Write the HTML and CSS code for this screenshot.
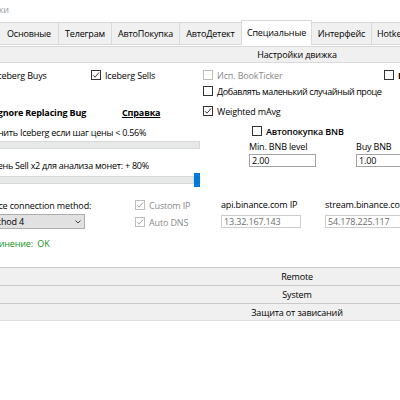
FILE: index.html
```html
<!DOCTYPE html>
<html>
<head>
<meta charset="utf-8">
<link rel="stylesheet" href="styles.css">
</head>
<body>
<div class="window">
  <div class="title"><span class="title-text">Настройки</span></div>
  <div class="tabs">
    <div class="tab t1">Основные</div>
    <div class="tab t2">Телеграм</div>
    <div class="tab t3">АвтоПокупка</div>
    <div class="tab t4">АвтоДетект</div>
    <div class="tab t5 active">Специальные</div>
    <div class="tab t6">Интерфейс</div>
    <div class="tab t7">Hotkeys</div>
  </div>
  <div class="section-head">Настройки движка</div>
  <div class="content">
    <div class="col-left">
      <div class="row">
        <label class="cbl buys"><span class="cb"></span>Iceberg Buys</label>
        <label class="cbl"><span class="cb"><svg viewBox="0 0 8 8"><path d="M1 4.2 L3 6.2 L7 1.5"/></svg></span>Iceberg Sells</label>
      </div>
      <div class="row r3">
        <label class="cbl ignore bold"><span class="cb"></span>Ignore Replacing Bug</label>
        <span class="link">Справка</span>
      </div>
      <div class="row r4"><span class="cut cut-a">Отменить Iceberg если шаг цены &lt; 0.56%</span></div>
      <div class="slider s1"><div class="track"></div></div>
      <div class="row r5"><span class="cut cut-b">Уровень Sell x2 для анализа монет: + 80%</span></div>
      <div class="slider s2"><div class="track"></div><div class="thumb"></div></div>
      <div class="conn">
        <div class="conn-left">
          <div class="row"><span class="cut cut-c">Binance connection method:</span></div>
          <div class="select"><span>Method 4</span><svg class="chev" viewBox="0 0 6 4"><path d="M0.5 0.5 L3 3 L5.5 0.5"/></svg></div>
          <div class="row status"><span class="cut cut-d">Соединение:&nbsp; OK</span></div>
        </div>
        <div class="conn-right">
          <label class="cbl disabled"><span class="cb"><svg viewBox="0 0 8 8"><path d="M1 4.2 L3 6.2 L7 1.5"/></svg></span>Custom IP</label>
          <label class="cbl disabled"><span class="cb"><svg viewBox="0 0 8 8"><path d="M1 4.2 L3 6.2 L7 1.5"/></svg></span>Auto DNS</label>
        </div>
      </div>
    </div>
    <div class="col-right">
      <div class="row">
        <label class="cbl disabled book"><span class="cb"></span>Исп. BookTicker</label>
        <label class="cbl bold"><span class="cb"></span>Extended</label>
      </div>
      <div class="row"><label class="cbl clip"><span class="cb"></span>Добавлять маленький случайный процент</label></div>
      <div class="row r3b"><label class="cbl"><span class="cb"><svg viewBox="0 0 8 8"><path d="M1 4.2 L3 6.2 L7 1.5"/></svg></span>Weighted mAvg</label></div>
      <div class="row r4b"><label class="cbl semi"><span class="cb"></span>Автопокупка BNB</label></div>
      <div class="fields bnb">
        <div class="field f-min"><div class="flabel">Min. BNB level</div><div class="input">2.00</div></div>
        <div class="field f-buy"><div class="flabel">Buy BNB</div><div class="input">1.00</div></div>
      </div>
      <div class="fields ips">
        <div class="field f-api"><div class="flabel">api.binance.com IP</div><div class="input ro">13.32.167.143</div></div>
        <div class="field f-stream"><div class="flabel">stream.binance.com IP</div><div class="input ro">54.178.225.117</div></div>
      </div>
    </div>
  </div>
  <div class="bar">Remote</div>
  <div class="bar">System</div>
  <div class="bar last">Защита от зависаний</div>
</div>
</body>
</html>
```
FILE: styles.css
```css
html, body {
  margin: 0;
  padding: 0;
  width: 400px;
  height: 400px;
  overflow: hidden;
  background: #ffffff;
}
body {
  font-family: "Open Sans", "Noto Sans", sans-serif;
  font-size: 9px;
  letter-spacing: -0.15px;
  color: #000;
}
.window {
  width: 600px;
}
.title {
  height: 20px;
  line-height: 20px;
  color: #9a9a9a;
  padding-left: 2px;
  white-space: nowrap;
}
.title-text {
  display: inline-block;
  margin-left: -39px;
}
.tabs {
  display: flex;
  align-items: flex-end;
  height: 24px;
  border-bottom: 1px solid #d9d9d9;
}
.tab {
  box-sizing: border-box;
  height: 22px;
  border: 1px solid #d9d9d9;
  border-bottom: none;
  margin-left: -1px;
  background: #f0f0f0;
  display: flex;
  align-items: center;
  justify-content: center;
  white-space: nowrap;
  flex: none;
}
.tab.active {
  height: 25px;
  margin-bottom: -1px;
  background: #ffffff;
  padding-bottom: 2px;
}
.t1 { width: 60px; }
.t2 { width: 54px; }
.t3 { width: 69px; }
.t4 { width: 63px; }
.t5 { width: 71px; }
.t6 { width: 61px; }
.t7 { width: 70px; justify-content: flex-start; padding-left: 5px; }

.section-head {
  box-sizing: border-box;
  margin-top: 1px;
  width: 594px;
  height: 17px;
  background: #f0f0f0;
  border-top: 1px solid #dadada;
  border-bottom: 1px solid #dadada;
  display: flex;
  align-items: center;
  justify-content: center;
}
.content {
  height: 204px;
  display: flex;
}
.col-left {
  margin-left: -19px;
  width: 219px;
  flex: none;
  padding-top: 4px;
  display: flex;
  flex-direction: column;
}
.col-right {
  flex: none;
  width: 240px;
  padding-top: 4px;
  display: flex;
  flex-direction: column;
}
.row {
  height: 16px;
  display: flex;
  align-items: center;
  white-space: nowrap;
}
.cbl {
  display: flex;
  align-items: center;
  white-space: nowrap;
  flex: none;
}
.cb {
  box-sizing: border-box;
  width: 10px;
  height: 10px;
  border: 1px solid #333;
  background: #fff;
  margin-right: 4px;
  flex: none;
  display: flex;
}
.cb svg {
  width: 8px;
  height: 8px;
  fill: none;
  stroke: #222;
  stroke-width: 0.9;
}
.disabled { color: #8a8a8a; }
.disabled .cb { border-color: #bdbdbd; }
.disabled .cb svg { stroke: #9a9a9a; }
.bold { font-weight: 700; }
.semi { font-weight: 600; }
.buys { width: 110px; }
.ignore { width: 141px; }
.link {
  font-weight: 700;
  text-decoration: underline;
}
.r3 { margin-top: 21px; }
.r4 { margin-top: 4px; }
.cut { display: inline-block; flex: none; }
.cut-a { margin-left: -5px; letter-spacing: -0.25px; }
.cut-b { margin-left: -4px; letter-spacing: -0.25px; }
.cut-c { margin-left: -6px; }
.cut-d { margin-left: -3px; }
.slider {
  flex: none;
}
.s1 {
  height: 8px;
  margin-top: 1px;
}
.s1 .track {
  height: 8px;
}
.track {
  box-sizing: border-box;
  background: #e7e9e9;
  border: 1px solid #d6d8d8;
}
.r5 { margin-top: 8px; }
.s2 {
  height: 14px;
  display: flex;
  align-items: center;
}
.s2 .track {
  width: 213px;
  height: 8px;
}
.thumb {
  width: 6px;
  height: 14px;
  background: #0078d7;
}
.conn {
  display: flex;
  margin-top: 10px;
}
.conn-left {
  width: 154px;
  flex: none;
  display: flex;
  flex-direction: column;
}
.conn-right {
  display: flex;
  flex-direction: column;
}
.conn-right .cbl { height: 16px; margin-bottom: 1px; }
.select {
  box-sizing: border-box;
  margin-top: 1px;
  width: 104px;
  height: 15px;
  background: #e1e1e1;
  border: 1px solid #adadad;
  display: flex;
  align-items: center;
  justify-content: space-between;
  padding-left: 3px;
  padding-right: 3px;
  white-space: nowrap;
}
.chev {
  width: 6px;
  height: 4px;
  fill: none;
  stroke: #333;
  stroke-width: 0.9;
}
.status {
  margin-top: 6px;
  color: #14911a;
}
.book { width: 181px; padding-left: 3px; }
.clip {
  padding-left: 3px;
  width: 179px;
  overflow: hidden;
  letter-spacing: -0.4px;
}
.r3b { margin-top: 4px; }
.r3b .cbl { padding-left: 3px; }
.r4b { margin-top: 4px; padding-left: 52px; }
.fields {
  display: flex;
}
.bnb { margin-top: 1px; }
.ips { margin-top: 31px; }
.field {
  display: flex;
  flex-direction: column;
  flex: none;
}
.flabel {
  height: 14px;
  line-height: 14px;
  white-space: nowrap;
}
.input {
  box-sizing: border-box;
  height: 13px;
  border: 1px solid #a3a3a3;
  background: #fff;
  padding-left: 2px;
  display: flex;
  align-items: center;
  white-space: nowrap;
}
.input.ro {
  border-color: #cccccc;
  color: #6d6d6d;
  margin-top: 3px;
}
.f-min { margin-left: 49px; width: 67px; }
.f-buy { margin-left: 40px; width: 80px; }
.f-api { margin-left: 21px; width: 80px; }
.f-stream { margin-left: 24px; width: 80px; }
.bar {
  box-sizing: border-box;
  width: 594px;
  height: 18px;
  background: #f0f0f0;
  border-top: 1px solid #c9c9c9;
  display: flex;
  align-items: center;
  justify-content: center;
}
.bar.last {
  border-bottom: 1px solid #dedede;
}
```
